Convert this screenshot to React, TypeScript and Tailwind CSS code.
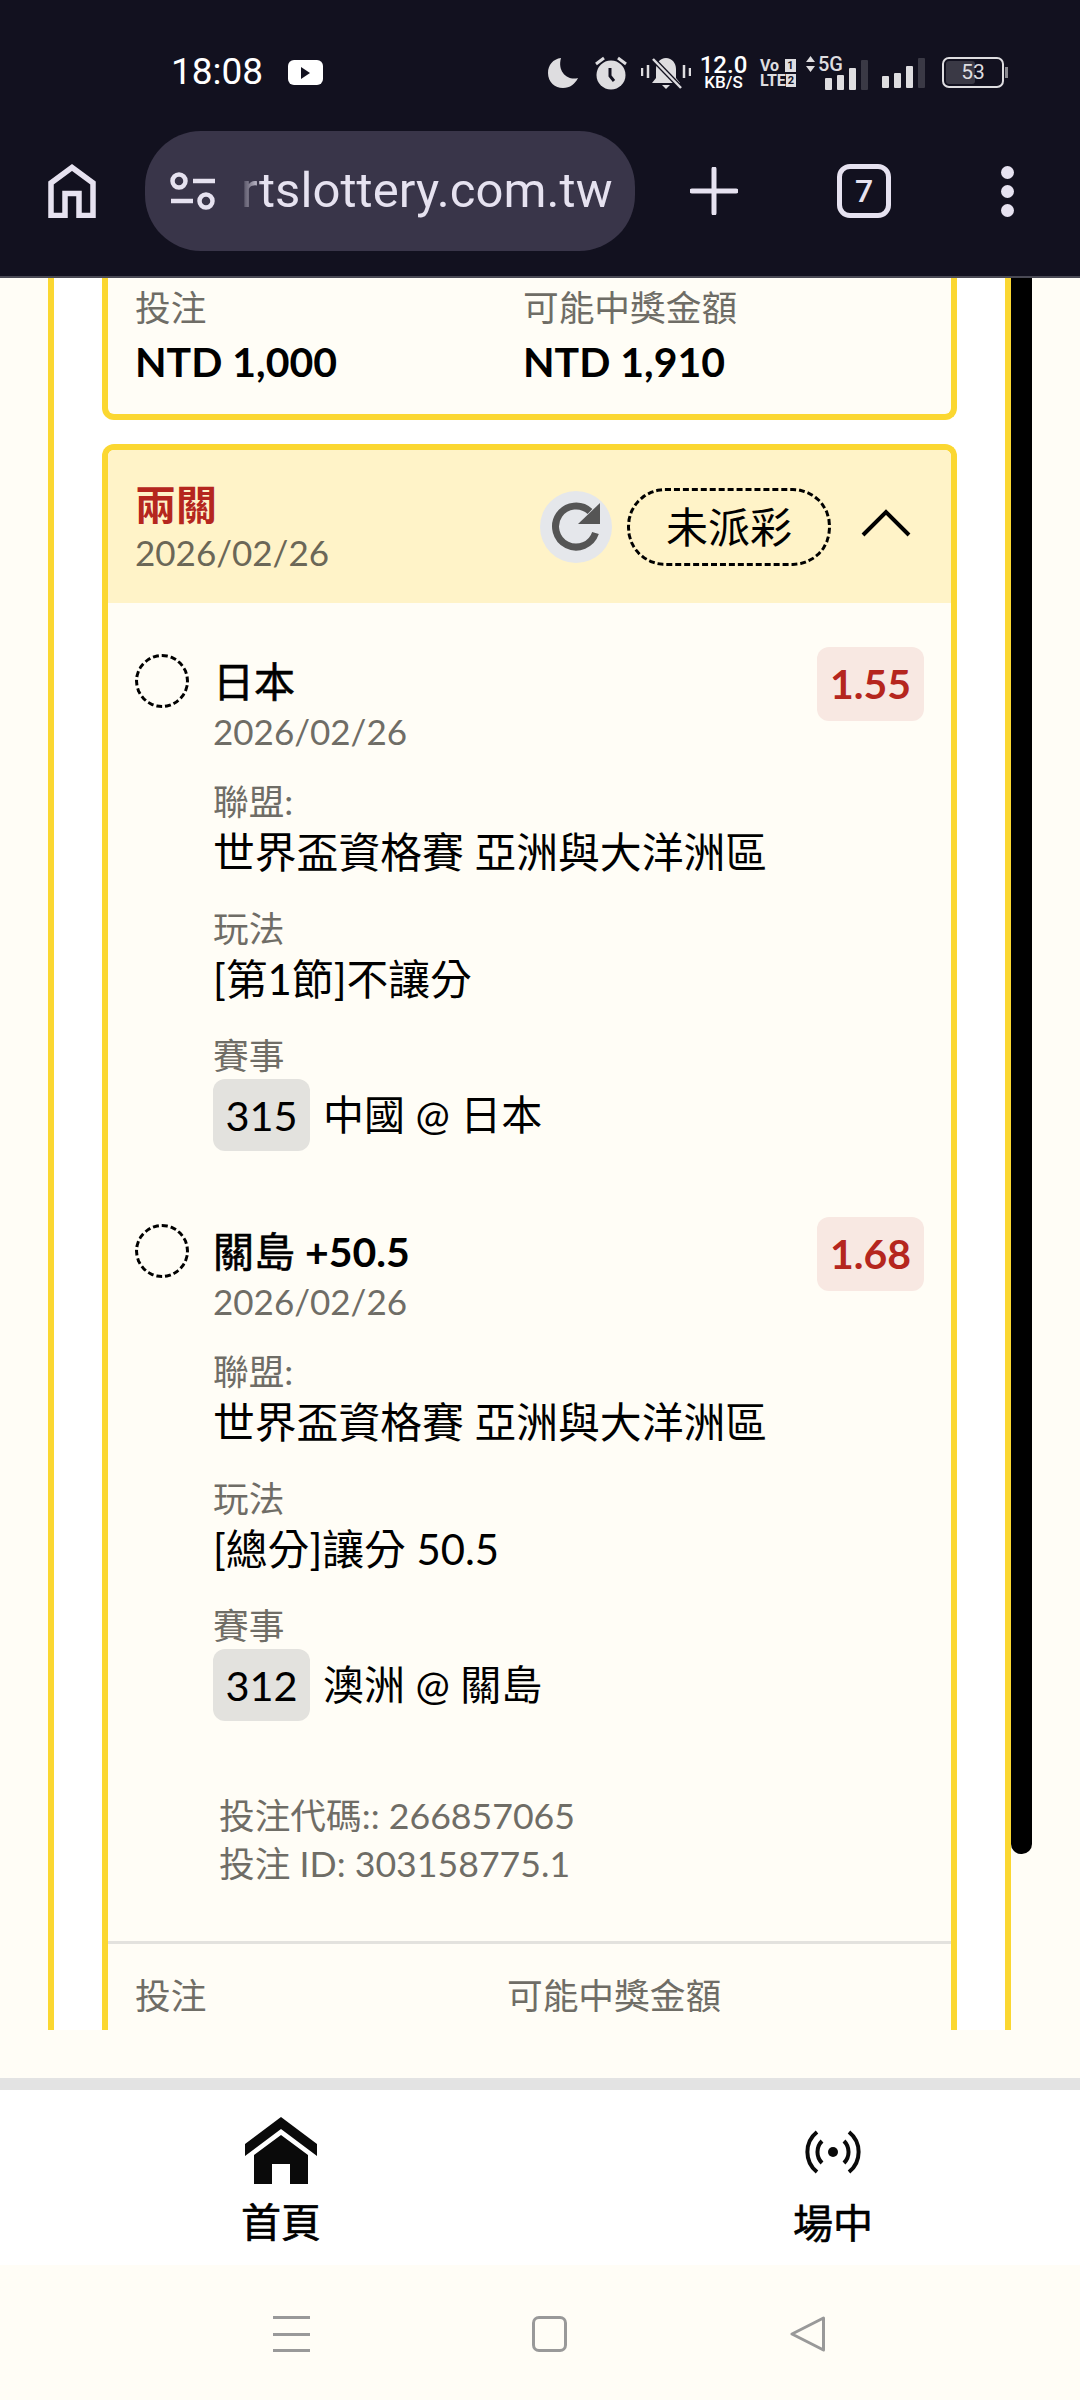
const font = { fontFamily: '"Lato", "Noto Sans CJK TC", sans-serif' };

function SignalBars() {
  return (
    <>
      <span className="h-[12px] w-[7px] rounded-[1px] bg-[#dedde0]" />
      <span className="h-[15px] w-[7px] rounded-[1px] bg-[#dedde0]" />
      <span className="h-[22px] w-[7px] rounded-[1px] bg-[#dedde0]" />
      <span className="h-[30px] w-[7px] rounded-[1px] bg-[#3a3945]" />
    </>
  );
}

function StatusIcons() {
  return (
    <div className="flex items-center text-[#dedde0]">
      <svg width="30" height="30" viewBox="0 0 30 30" className="ml-[548px] shrink-0">
        <path d="M13 0C5 1 0 7 0 15c0 9 7 15 15 15 7 0 12-4 15-10-10 3-21-6-17-20z" fill="currentColor" />
      </svg>
      <svg width="32" height="34" viewBox="0 0 32 34" className="ml-[17px] shrink-0">
        <circle cx="16" cy="19" r="14.5" fill="currentColor" />
        <path d="M1 8l8-6M31 8l-8-6" stroke="currentColor" strokeWidth="3" />
        <path d="M15 12v8l4 5" stroke="#12111f" strokeWidth="3" fill="none" />
      </svg>
      <svg width="50" height="34" viewBox="0 0 50 34" className="ml-[14px] shrink-0">
        <path d="M25 2c-6 0-10 5-10 11v9l-4 5h28l-4-5v-9c0-6-4-11-10-11z" fill="currentColor" />
        <path d="M21 29h8l-4 4z" fill="currentColor" />
        <path d="M12 3l28 29" stroke="#12111f" strokeWidth="5" />
        <path d="M12 3l28 29" stroke="currentColor" strokeWidth="2.5" />
        <path d="M1 12v8M7 9v13M43 9v13M49 12v8" stroke="currentColor" strokeWidth="2.5" />
      </svg>
      <div className="ml-[10px] flex w-[45px] shrink-0 flex-col items-center font-['Roboto'] text-white">
        <span className="text-[24px] font-medium leading-[20px]">12.0</span>
        <span className="text-[17px] font-medium leading-[15px]">KB/S</span>
      </div>
      <div className="ml-[14px] flex w-[36px] shrink-0 flex-col font-['Roboto'] text-[16px] font-bold leading-[15px]">
        <div className="flex items-center justify-between">
          <span>Vo</span>
          <span className="h-[13px] w-[11px] bg-[#dedde0] text-center text-[11px] leading-[13px] text-[#12111f]">1</span>
        </div>
        <div className="flex items-center justify-between">
          <span>LTE</span>
          <span className="h-[13px] w-[11px] bg-[#dedde0] text-center text-[11px] leading-[13px] text-[#12111f]">2</span>
        </div>
      </div>
      <div className="relative ml-[10px] flex h-[34px] w-[62px] shrink-0 items-end gap-[5px] pl-[19px]">
        <svg width="9" height="16" viewBox="0 0 9 16" className="absolute left-0 top-0">
          <path d="M4.5 0L9 6H0zM4.5 16L0 10h9z" fill="currentColor" />
        </svg>
        <span className="absolute left-[12px] top-[-2px] font-['Roboto'] text-[20px] font-medium leading-[20px]">5G</span>
        <SignalBars />
      </div>
      <div className="ml-[14px] flex h-[30px] shrink-0 items-end gap-[5px]">
        <SignalBars />
      </div>
      <div className="ml-[17px] flex shrink-0 items-center">
        <div className="flex h-[31px] w-[62px] items-center rounded-[7px] border-2 border-[#dedde0] p-[2px]">
          <div className="relative h-full w-full">
            <div className="h-full w-[53%] rounded-[3px] bg-[#3a3945]" />
            <span className="absolute inset-0 text-center font-['Roboto'] text-[21px] leading-[23px]">53</span>
          </div>
        </div>
        <span className="ml-[1px] h-[11px] w-[3px] bg-[#8a8990]" />
      </div>
    </div>
  );
}

function BrowserBar() {
  return (
    <div className="flex h-[278px] shrink-0 flex-col border-b-2 border-[#4a4a55] bg-[#12111f]">
      <div className="relative flex h-[131px] shrink-0 pt-[55px]">
        <span className="absolute left-[171px] top-[52px] font-['Roboto'] text-[37px] leading-[40px] text-white">18:08</span>
        <div className="absolute left-[288px] top-[60px] flex h-[25px] w-[35px] items-center justify-center rounded-[6px] bg-white">
          <div className="h-0 w-0 border-y-[6px] border-l-[9px] border-y-transparent border-l-[#12111f]" />
        </div>
        <div className="absolute left-0 top-[55px]">
          <StatusIcons />
        </div>
      </div>
      <div className="flex h-[120px] shrink-0 items-center text-[#e6e2f0]">
        <svg width="48" height="54" viewBox="0 0 48 54" className="ml-[48px] shrink-0">
          <path d="M3 51.500V19L24 3.500 45 19V51.500H31V29.500H17V51.500z" fill="none" stroke="currentColor" strokeWidth="5.500" />
        </svg>
        <div className="relative ml-[49px] flex h-[120px] w-[490px] shrink-0 items-center rounded-[56px] bg-[#393549]">
          <svg width="46" height="38" viewBox="0 0 46 38" className="ml-[25px] shrink-0">
            <circle cx="9" cy="9" r="6.500" fill="none" stroke="currentColor" strokeWidth="4.500" />
            <circle cx="36" cy="29" r="6.500" fill="none" stroke="currentColor" strokeWidth="4.500" />
            <path d="M23 9h22M1 29h22" stroke="currentColor" strokeWidth="4.500" />
          </svg>
          <span className="ml-[25px] font-['Roboto'] text-[49px] leading-[60px] tracking-[0.1px]">rtslottery.com.tw</span>
          <div className="absolute left-[94px] top-[30px] h-[60px] w-[24px] bg-gradient-to-r from-[#393549] to-transparent" />
        </div>
        <svg width="48" height="48" viewBox="0 0 48 48" className="ml-[55px] shrink-0">
          <path d="M24 2v44M2 24h44" stroke="currentColor" strokeWidth="5" strokeLinecap="round" />
        </svg>
        <div className="ml-[99px] flex h-[54px] w-[54px] shrink-0 items-center justify-center rounded-[13px] border-[5px] border-[#e6e2f0] font-['Roboto'] text-[32px] font-medium leading-none">
          7
        </div>
        <div className="ml-[110px] flex shrink-0 flex-col gap-[6px]">
          <span className="h-[13px] w-[13px] rounded-full bg-[#e6e2f0]" />
          <span className="h-[13px] w-[13px] rounded-full bg-[#e6e2f0]" />
          <span className="h-[13px] w-[13px] rounded-full bg-[#e6e2f0]" />
        </div>
      </div>
    </div>
  );
}

function Field({ label, children }: { label: string; children: React.ReactNode }) {
  return (
    <div className="mt-[27px]">
      <div className="text-[35.7px] leading-[46px] text-[#6f6d66]">{label}</div>
      {children}
    </div>
  );
}

function Selection({ name, suffix, odds, rule, no, game, className }: {
  name: string;
  suffix?: string;
  odds: string;
  rule: string;
  no: string;
  game: string;
  className: string;
}) {
  return (
    <div className={`relative pl-[105px] pt-[10px] ${className}`}>
      <div className="absolute left-[27px] top-[7px] h-[54px] w-[54px] rounded-full border-[3px] border-dashed border-black" />
      <div className="text-[41px] leading-[50px] text-black">
        <span className="[-webkit-text-stroke:0.6px_#000]">{name}</span>
        {suffix && <span className="font-bold"> {suffix}</span>}
      </div>
      <div className="mb-[-2px] mt-[1px] text-[35px] leading-[46px] text-[#6f6d66]">2026/02/26</div>
      <div className="absolute right-[27px] top-0 flex h-[74px] w-[107px] items-center justify-center rounded-[12px] bg-[#f8e8e2] text-[41px] font-bold text-[#b5261e]">
        {odds}
      </div>
      <Field label="聯盟:">
        <div className="text-[41.800px] leading-[54px] text-black">世界盃資格賽 亞洲與大洋洲區</div>
      </Field>
      <Field label="玩法">
        <div className="text-[41.800px] leading-[54px] text-black">{rule}</div>
      </Field>
      <Field label="賽事">
        <div className="flex items-center text-[41.500px] leading-[54px] text-black">
          <span className="flex h-[72px] w-[97px] items-center justify-center rounded-[12px] bg-[#e3e2de]">{no}</span>
          <span className="ml-[13px] text-[41px]">{game}</span>
        </div>
      </Field>
    </div>
  );
}

function Content() {
  return (
    <div className="relative h-[1752px] shrink-0 overflow-hidden">
      <div className="ml-[48px] h-full w-[963px] border-x-[6px] border-[#fbd731] bg-white px-[48px]">
        <div className="flex h-[142px] rounded-b-[12px] border-x-[6px] border-b-[6px] border-[#fbd731] bg-[#fffdf6] pl-[27px] pt-[6px]">
          <div className="w-[388px]">
            <div className="text-[35.7px] leading-[48px] text-[#6f6d66]">投注</div>
            <div className="mt-[5px] text-[41px] font-bold leading-[50px] text-black">NTD 1,000</div>
          </div>
          <div>
            <div className="text-[35.7px] leading-[48px] text-[#6f6d66]">可能中獎金額</div>
            <div className="mt-[5px] text-[41px] font-bold leading-[50px] text-black">NTD 1,910</div>
          </div>
        </div>
        <div className="mt-[24px] rounded-t-[12px] border-x-[6px] border-t-[6px] border-[#fbd731] bg-[#fffdf6] pb-[120px]">
          <div className="flex h-[153px] items-center rounded-t-[6px] bg-[#fff3c8] pl-[27px]">
            <div className="w-[405px] pt-[3px]">
              <div className="text-[41px] font-bold leading-[48px] text-[#b5261e]">兩關</div>
              <div className="text-[35px] leading-[46px] text-[#6b6757]">2026/02/26</div>
            </div>
            <div className="flex h-[72px] w-[72px] items-center justify-center rounded-full bg-[#e5e7eb]">
              <svg width="50" height="50" viewBox="0 0 50 50">
                <path d="M44.500 31A20.500 20.500 0 1 1 39 9.500" fill="none" stroke="#555555" strokeWidth="7" />
                <path d="M49 1V22H27z" fill="#555555" />
              </svg>
            </div>
            <div className="ml-[15px] flex h-[78px] w-[204px] items-center justify-center rounded-[38px] border-[3px] border-dashed border-black text-[42px] leading-none text-black">
              未派彩
            </div>
            <svg width="50" height="28" viewBox="0 0 50 28" className="mb-[8px] ml-[30px]">
              <path d="M2 26L25 3l23 23" fill="none" stroke="#000000" strokeWidth="4" />
            </svg>
          </div>
          <Selection className="mt-[44px]" name="日本" odds="1.55" rule="[第1節]不讓分" no="315" game="中國 @ 日本" />
          <Selection className="mt-[66px]" name="關島" suffix="+50.5" odds="1.68" rule="[總分]讓分 50.5" no="312" game="澳洲 @ 關島" />
          <div className="ml-[111px] mt-[71px] text-[35.7px] leading-[48px] text-[#6f6d66]">
            <div>投注代碼:: 266857065</div>
            <div>投注 ID: 303158775.1</div>
          </div>
          <div className="mt-[53px] flex border-t-[3px] border-[#e3e2de] pl-[27px] pt-[28px] text-[35.7px] leading-[48px] text-[#6f6d66]">
            <div className="w-[372px]">投注</div>
            <div>可能中獎金額</div>
          </div>
        </div>
      </div>
      <div className="absolute left-[1011px] top-0 h-[1576px] w-[21px] rounded-b-[10px] bg-black" />
    </div>
  );
}

function BottomNav() {
  return (
    <div className="flex h-[187px] shrink-0 border-t-[12px] border-[#e3e3e3] bg-white pl-[5px]">
      <div className="flex w-[552px] shrink-0 flex-col items-center pt-[27px]">
        <svg width="72" height="67" viewBox="0 0 72 67">
          <path d="M36 0L72 27v12L36 12 0 39V27z" fill="#0a0a0a" />
          <path d="M36 18L63 38v29H45V47H27v20H9V38z" fill="#0a0a0a" />
        </svg>
        <div className="mt-[14px] text-[40px] leading-[48px] text-black [-webkit-text-stroke:0.6px_#000]">首頁</div>
      </div>
      <div className="flex w-[552px] shrink-0 flex-col items-center pt-[40px]">
        <svg width="56" height="44" viewBox="0 0 56 44">
          <circle cx="28" cy="22" r="5" fill="#0a0a0a" />
          <path d="M17 11A15.600 15.600 0 0 0 17 33M39 11A15.600 15.600 0 0 1 39 33M12 2A25.600 25.600 0 0 0 12 42M44 2A25.600 25.600 0 0 1 44 42" fill="none" stroke="#0a0a0a" strokeWidth="4" />
        </svg>
        <div className="mt-[25px] text-[40px] leading-[48px] text-black [-webkit-text-stroke:0.6px_#000]">場中</div>
      </div>
    </div>
  );
}

function GestureBar() {
  return (
    <div className="flex h-[133px] shrink-0 items-start bg-[#fffdf6] pt-[51px]">
      <div className="ml-[273px] flex h-[36px] w-[37px] shrink-0 flex-col justify-between">
        <span className="h-[3px] bg-[#999999]" />
        <span className="h-[3px] bg-[#999999]" />
        <span className="h-[3px] bg-[#999999]" />
      </div>
      <div className="ml-[222px] h-[36px] w-[35px] shrink-0 rounded-[7px] border-[3px] border-[#999999]" />
      <svg width="36" height="36" viewBox="0 0 36 36" className="ml-[223px] shrink-0">
        <path d="M33.500 2L2 18l31.500 16z" fill="none" stroke="#999999" strokeWidth="3" strokeLinejoin="round" />
      </svg>
    </div>
  );
}

export default function App() {
  return (
    <div className="flex h-[2400px] w-[1080px] flex-col overflow-hidden bg-[#fffdf6]" style={font}>
      <BrowserBar />
      <Content />
      <div className="h-[48px] shrink-0" />
      <BottomNav />
      <GestureBar />
    </div>
  );
}
